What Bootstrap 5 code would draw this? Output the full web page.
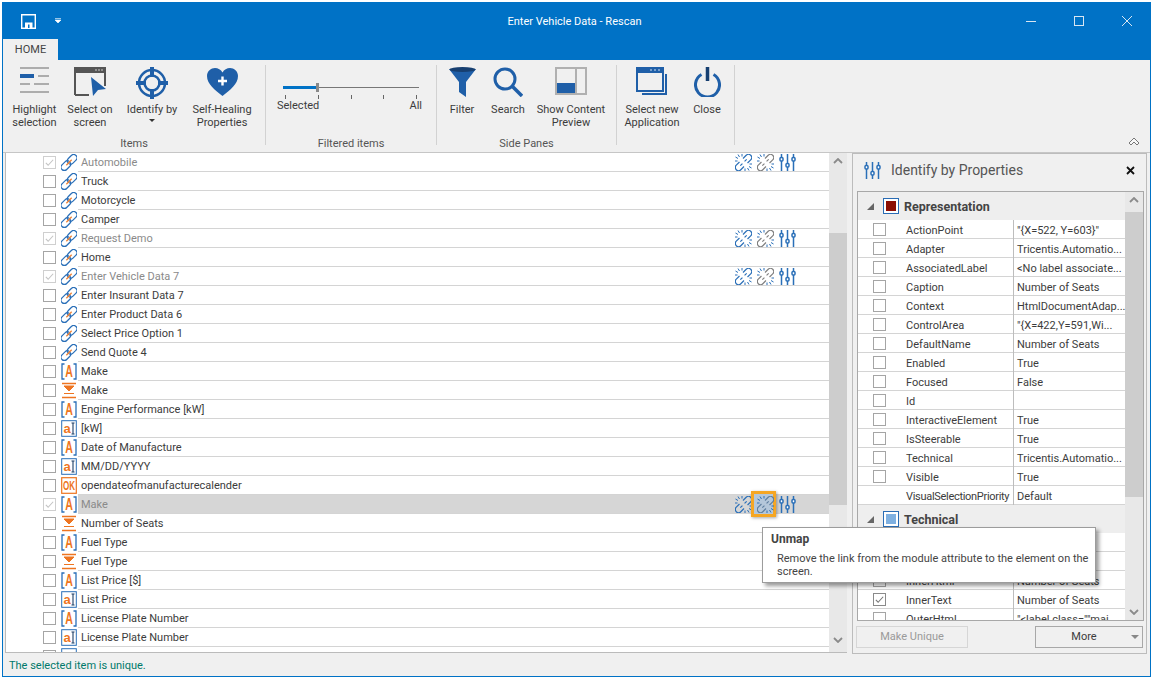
<!DOCTYPE html>
<html lang="en">
<head>
    <meta charset="UTF-8">
    <meta name="viewport" content="width=device-width, initial-scale=1.0">
    <title>Enter Vehicle Data - Rescan</title>
    <link href="https://cdn.jsdelivr.net/npm/bootstrap@5.3.0/dist/css/bootstrap.min.css" rel="stylesheet">

    <style>
        body { margin: 0; background: #fff; font: 11px/13px Roboto, "Liberation Sans", sans-serif; color: #3c3c3c; overflow: hidden; }
        svg { display: block; flex: none; }
        .app-window { margin: 2px 0 0 2px; width: 1149px; height: 675px; border: 1px solid #0072c6; background: #f0f0f0; }

        /* title bar */
        .titlebar { height: 36px; background: #0072c6; color: #fff; padding-left: 18px; position: relative; }
        .titlebar .title { position: absolute; left: 0; right: 4px; text-align: center; }
        .titlebar .qat-arrow { margin-left: 19px; }
        .win-btns { margin-left: auto; gap: 38px; padding-right: 18px; }
        .tabstrip { height: 21px; background: #0072c6; }
        .tabstrip .tab { width: 55px; background: #f0f0f0; text-align: center; line-height: 21px; color: #444; }

        /* ribbon */
        .ribbon { height: 93px; border-bottom: 1px solid #c6c6c6; }
        .rb-group { height: 92px; padding-top: 7px; }
        .rb-btn { text-align: center; }
        .rb-btn svg { margin: 0 auto 6px; }
        .rb-label { margin-top: auto; height: 15px; text-align: center; line-height: 14px; color: #555; }
        .rb-sep { width: 1px; height: 80px; margin-top: 5px; background: #d2d2d2; }
        .caret-mini { margin: 3px auto 0; width: 0; border: 3px solid transparent; border-top-color: #333; border-bottom: 0; }
        .slider { width: 136px; margin: 16px 0 0 17px; }
        .slider .fill { width: 33px; height: 3px; background: #0072c6; }
        .slider .thumb { width: 3px; height: 9px; background: #8a8a8a; }
        .slider .rail { height: 1px; background: #777; }
        .ticks { padding: 3px 2px 0; }
        .ticks i { width: 1px; height: 4px; background: #666; }
        .slider-text { margin: 0 -3px 0 -6px; }
        .ribbon-collapse { margin: 0 10px 6px auto; align-self: flex-end; }

        /* element list */
        .list-area { margin: 0 5px 0 2px; width: 842px; height: 500px; border-bottom: 1px solid #bbb; }
        .elements { width: 824px; background: #fff; border-left: 1px solid #bbb; overflow: hidden; }
        .el-row { height: 19px; padding-left: 37px; }
        .el-row .el-text { flex: 1; height: 19px; margin-left: 1px; padding-left: 3px; line-height: 20px; border-bottom: 1px solid #d4d4d4; color: #3c3c3c; }
        .el-row.dim .el-text { color: #8a8a8a; }
        .el-row.active .el-text { background: #d6d6d6; }
        .el-row svg.kind { margin-left: 5px; overflow: visible; }
        .actions { gap: 5px; padding-right: 33px; height: 18px; }
        .act-hot { position: relative; }
        .act-hot::before { content: ""; position: absolute; left: -6px; top: -5px; width: 25px; height: 26px; background: #b4c7da; border: 3px solid #f5a623; box-shadow: 1px 1px 3px rgba(0, 0, 0, .35); }
        .act-hot svg { position: relative; }

        .form-check-input.box[type=checkbox] { width: 13px; height: 13px; margin: 0; flex: none; border: 1px solid #a5a5a5; border-radius: 0; background-color: #fff; background-size: 11px; opacity: 1; }
        .form-check-input.box[type=checkbox]:checked { border-color: #8a8a8a; background-image: url("data:image/svg+xml,%3csvg xmlns='http://www.w3.org/2000/svg' viewBox='0 0 12 12'%3e%3cpath fill='none' stroke='%23777' stroke-width='1.2' d='M2 6.5l2.5 2.5L10 3'/%3e%3c/svg%3e"); }
        .form-check-input.box.soft[type=checkbox]:checked { border-color: #cfcfcf; background-image: url("data:image/svg+xml,%3csvg xmlns='http://www.w3.org/2000/svg' viewBox='0 0 12 12'%3e%3cpath fill='none' stroke='%23c4c4c4' stroke-width='1.2' d='M2 6.5l2.5 2.5L10 3'/%3e%3c/svg%3e"); }

        .vscroll { width: 18px; background: #e8e8e8; }
        .vscroll .arrow { height: 16px; }
        .vscroll .thumb { background: #cdcdcd; }
        .main-scroll .gap-top { height: 64px; }
        .main-scroll .thumb { height: 272px; }
        .prop-scroll .thumb { height: 285px; }

        /* properties pane */
        .pane { width: 295px; height: 501px; border: 1px solid #bcbcbc; padding: 0 3px 4px 4px; }
        .pane-head { height: 37px; padding: 0 0 5px 7px; gap: 10px; font-size: 14px; color: #555; }
        .pane-close { margin-left: auto; margin-right: 8px; }
        .prop-box { width: 287px; height: 430px; border: 1px solid #a8a8a8; background: #fff; overflow: hidden; }
        .prop-list { width: 269px; overflow: hidden; }
        .section { background: #eee; height: 28px; padding-left: 9px; font-size: 12.5px; font-weight: 700; color: #444; flex: none; }
        .section .tri { width: 0; height: 0; border-left: 7px solid transparent; border-bottom: 7px solid #666; margin-right: 9px; }
        .section .swatch { width: 16px; height: 16px; border: 1px solid #2a6cb4; padding: 2px; margin-right: 5px; background: #fff; }
        .section .swatch i { display: block; height: 100%; }
        .prop-row { height: 19px; flex: none; border-bottom: 1px solid #d4d4d4; color: #3c3c3c; }
        .prop-row .cell-check { width: 48px; padding-left: 15px; }
        .prop-row .cell-name { width: 107px; padding-top: 2px; white-space: nowrap; }
        .prop-row .cell-name.tight { letter-spacing: -.3px; }
        .prop-row .cell-val { flex: 1; height: 19px; padding-left: 3px; line-height: 21px; border-left: 1px solid #bdbdbd; white-space: nowrap; overflow: hidden; }
        .pane-btns { height: 22px; margin-top: 5px; }
        .btn.flat { height: 22px; padding: 0; border-radius: 0; font-size: inherit; line-height: 20px; background: #f0f0f0; color: #3c3c3c; }
        .btn.flat.make-unique { width: 112px; margin-left: -1px; border: 1px solid #d6d6d6; color: #9a9a9a; opacity: 1; }
        .btn.flat.more { width: 108px; border: 1px solid #a8a8a8; margin-left: auto; padding-right: 10px; position: relative; }
        .btn.flat.more::after { content: ""; position: absolute; right: 3px; top: 8px; border: 4px solid transparent; border-top-color: #888; border-bottom: 0; }

        .statusbar { height: 22px; padding-left: 6px; color: #00796b; }

        /* tooltip over the grid */
        .hint { position: absolute; left: 762px; top: 527px; width: 334px; height: 56px; background: #fff; border: 1px solid #9c9c9c; box-shadow: 3px 3px 4px rgba(0, 0, 0, .4); padding: 5px 3px 5px 8px; color: #444; }
        .hint b { display: block; margin-bottom: 6px; font-size: 12px; }
        .hint p { margin: 0 0 0 6px; }
    </style>
</head>
<body>

    <!-- shared icons -->
    <svg width="0" height="0" class="position-absolute">
        <symbol id="i-link" viewBox="0 0 17 17">
            <g transform="rotate(-45 8.5 8.5)" fill="none">
                <rect x="-2" y="5" width="11.500" height="7" rx="3.500" stroke="#2a6fb8" stroke-width="1.300"/>
                <rect x="7.500" y="5" width="11.500" height="7" rx="3.500" stroke="#2a6fb8" stroke-width="1.300"/>
                <path d="M4.500 8.500h8" stroke="#f08030" stroke-width="1.400"/>
            </g>
        </symbol>
        <symbol id="i-unlink" viewBox="0 0 17 17">
            <g transform="rotate(-45 8.5 8.5)" fill="none" stroke="currentColor" stroke-width="1.200">
                <path d="M6 5.300H1.500a3.200 3.200 0 0 0 0 6.400H6"/>
                <path d="M11 5.300h4.500a3.200 3.200 0 0 1 0 6.400H11"/>
                <path d="M4 8.500h3M10 8.500h3"/>
            </g>
            <path d="M3 0.500l1.500 2.500M0.500 3l2.500 1.500M0 7h2.500M7 0v2.500M14 16.500l-1.500-2.500M16.500 14l-2.500-1.500M17 10h-2.500M10 17v-2.500" stroke="#2a6fb8" fill="none"/>
        </symbol>
        <symbol id="i-tune" viewBox="0 0 17 17">
            <path d="M2.500 0v17M8.500 0v17M14.500 0v17" stroke="#2a6fb8" stroke-width="1.500"/>
            <g fill="#fff" stroke="#2a6fb8" stroke-width="1.500">
                <rect x="1" y="3.500" width="3" height="3.500" rx="1"/>
                <rect x="7" y="9.500" width="3" height="3.500" rx="1"/>
                <rect x="13" y="3.500" width="3" height="3.500" rx="1"/>
            </g>
        </symbol>
        <symbol id="up" viewBox="0 0 10 6"><path d="M1 5l4-4 4 4" fill="none" stroke="#8a8a8a" stroke-width="1.800"/></symbol>
        <symbol id="down" viewBox="0 0 10 6"><path d="M1 1l4 4 4-4" fill="none" stroke="#8a8a8a" stroke-width="1.800"/></symbol>
    </svg>

    <div class="app-window d-flex flex-column">

        <div class="titlebar d-flex align-items-center">
            <svg width="15" height="15" viewBox="0 0 15 15"><path d="M.7.7h13.600v13.600H.7z" fill="none" stroke="#fff" stroke-width="1.400"/><path d="M4 14V8.500h7.500V14z" fill="#fff"/><path d="M7 10.500h1.500V14H7z" fill="#0072c6"/></svg>
            <svg class="qat-arrow" width="6" height="6" viewBox="0 0 6 6"><path d="M0 .5h6M0 2h6l-3 3z" fill="#fff" stroke="#fff" stroke-width=".6"/></svg>
            <div class="title">Enter Vehicle Data - Rescan</div>
            <div class="win-btns d-flex align-items-center">
                <svg width="10" height="10" viewBox="0 0 10 10"><path d="M0 5.500h10" stroke="#d8e6f2"/></svg>
                <svg width="10" height="10" viewBox="0 0 10 10"><rect x=".5" y=".5" width="9" height="9" fill="none" stroke="#d8e6f2"/></svg>
                <svg width="10" height="10" viewBox="0 0 10 10"><path d="M0 0l10 10M10 0L0 10" stroke="#d8e6f2"/></svg>
            </div>
        </div>

        <div class="tabstrip"><div class="tab">HOME</div></div>

        <div class="ribbon d-flex">
            <!-- Items -->
            <div class="rb-group d-flex flex-column" style="width:262px">
                <div class="d-flex ps-1">
                    <div class="rb-btn" style="width:55px">
                        <svg width="29" height="30" viewBox="0 0 29 30"><path d="M0 1h29M0 25h29M0 17h10M14 17h15M18 9h11" stroke="#adadad" stroke-width="2"/><rect y="7" width="14" height="4" fill="#1f5fa8"/></svg>
                        Highlight selection
                    </div>
                    <div class="rb-btn" style="width:56px">
                        <svg width="33" height="30" viewBox="0 0 33 30"><path d="M1 28V1h30v18M1 28h14" fill="none" stroke="#555" stroke-width="2"/><rect x="1" y="1" width="30" height="5" fill="#555"/><path d="M24 3h2M27 3h2M21 3h2" stroke="#ccc"/><path d="M17 10l15 12-8 1-5 6z" fill="#1f5fa8"/></svg>
                        Select on screen
                    </div>
                    <div class="rb-btn" style="width:68px">
                        <svg width="32" height="32" viewBox="0 0 32 32" style="margin-bottom:4px"><g fill="none" stroke="#1f5fa8"><circle cx="16" cy="16" r="13" stroke-width="2.500"/><circle cx="16" cy="16" r="7.500" stroke-width="2.500"/><path d="M16 0v10M16 22v10M0 16h10M22 16h10" stroke-width="4"/></g></svg>
                        Identify by
                        <div class="caret-mini"></div>
                    </div>
                    <div class="rb-btn" style="width:72px">
                        <svg width="33" height="30" viewBox="0 0 33 30"><path d="M16.500 29C9 23 1 17 1 9c0-5 4-8 8-8 3 0 6 1.500 7.500 4.500C18 2.500 21 1 24 1c4 0 8 3 8 8 0 8-8 14-15.500 20z" fill="#1f5fa8"/><path d="M16.500 9.500v9M12 14h9" stroke="#fff" stroke-width="2.400"/></svg>
                        Self-Healing Properties
                    </div>
                </div>
                <div class="rb-label">Items</div>
            </div>
            <div class="rb-sep"></div>

            <!-- Filtered items -->
            <div class="rb-group d-flex flex-column" style="width:170px">
                <div class="slider">
                    <div class="d-flex align-items-center">
                        <div class="fill"></div>
                        <div class="thumb"></div>
                        <div class="rail flex-grow-1"></div>
                    </div>
                    <div class="ticks d-flex justify-content-between"><i></i><i></i><i></i><i></i><i></i></div>
                    <div class="slider-text d-flex justify-content-between"><span>Selected</span><span>All</span></div>
                </div>
                <div class="rb-label">Filtered items</div>
            </div>
            <div class="rb-sep"></div>

            <!-- Side Panes -->
            <div class="rb-group d-flex flex-column" style="width:179px">
                <div class="d-flex" style="padding-left:5px">
                    <div class="rb-btn" style="width:40px">
                        <svg width="27" height="30" viewBox="0 0 27 30"><path d="M0 2h27L17 15v15l-7-5V15z" fill="#1f5fa8"/><ellipse cx="13.500" cy="2.500" rx="13" ry="2.500" fill="#173f70"/></svg>
                        Filter
                    </div>
                    <div class="rb-btn" style="width:52px">
                        <svg width="30" height="30" viewBox="0 0 30 30"><circle cx="12" cy="12" r="10" fill="none" stroke="#1f5fa8" stroke-width="3"/><path d="M19 19l10 10" stroke="#1f5fa8" stroke-width="3.500"/></svg>
                        Search
                    </div>
                    <div class="rb-btn" style="width:74px">
                        <svg width="32" height="30" viewBox="0 0 32 30"><rect x="1" y="1" width="30" height="26" fill="none" stroke="#b0b0b0" stroke-width="2"/><path d="M21 1v26" stroke="#b0b0b0" stroke-width="2"/><rect x="2" y="16" width="18" height="10" fill="#1f5fa8"/></svg>
                        Show Content Preview
                    </div>
                </div>
                <div class="rb-label">Side Panes</div>
            </div>
            <div class="rb-sep"></div>

            <!-- Application -->
            <div class="rb-group" style="width:117px">
                <div class="d-flex">
                    <div class="rb-btn" style="width:70px">
                        <svg width="32" height="30" viewBox="0 0 32 30"><rect x="1" y="1" width="26" height="23" fill="#f0f0f0" stroke="#1f5fa8" stroke-width="2"/><rect x="1" y="1" width="26" height="5" fill="#1f5fa8"/><path d="M14 3h2M18 3h2M22 3h2" stroke="#cfe0f2"/><path d="M29 7h2v21H6v-2h23z" fill="#1f5fa8"/></svg>
                        Select new Application
                    </div>
                    <div class="rb-btn" style="width:40px">
                        <svg width="27" height="30" viewBox="0 0 27 30"><path d="M7.500 7.500a12 12 0 1 0 12 0" fill="none" stroke="#1f5fa8" stroke-width="3"/><path d="M13.500 0v14" stroke="#173f70" stroke-width="3.500"/></svg>
                        Close
                    </div>
                </div>
            </div>
            <div class="rb-sep"></div>

            <svg class="ribbon-collapse" width="12" height="9" viewBox="0 0 12 9"><path d="M6 1l5 5-2 2-3-3-3 3-2-2z" fill="#f8f8f8" stroke="#777"/></svg>
        </div>

        <div class="d-flex flex-grow-1">
            <div class="list-area d-flex">
                <div class="elements" id="elements"></div>
                <div class="vscroll main-scroll d-flex flex-column">
                    <div class="arrow d-flex align-items-center justify-content-center"><svg width="10" height="6"><use href="#up"/></svg></div>
                    <div class="gap-top"></div>
                    <div class="thumb"></div>
                    <div class="flex-grow-1"></div>
                    <div class="arrow d-flex align-items-center justify-content-center mb-1"><svg width="10" height="6"><use href="#down"/></svg></div>
                </div>
            </div>

            <div class="pane d-flex flex-column">
                <div class="pane-head d-flex align-items-center">
                    <svg width="17" height="17"><use href="#i-tune"/></svg>
                    Identify by Properties
                    <svg class="pane-close" width="9" height="9" viewBox="0 0 9 9"><path d="M1 1l7 7M8 1L1 8" stroke="#111" stroke-width="1.800"/></svg>
                </div>
                <div class="prop-box d-flex">
                    <div class="prop-list d-flex flex-column" id="props"></div>
                    <div class="vscroll prop-scroll d-flex flex-column">
                        <div class="arrow d-flex align-items-center justify-content-center"><svg width="10" height="6"><use href="#up"/></svg></div>
                        <div class="thumb mt-1"></div>
                        <div class="flex-grow-1"></div>
                        <div class="arrow d-flex align-items-center justify-content-center"><svg width="10" height="6"><use href="#down"/></svg></div>
                    </div>
                </div>
                <div class="pane-btns d-flex">
                    <button class="btn flat make-unique" disabled>Make Unique</button>
                    <button class="btn flat more">More</button>
                </div>
            </div>
        </div>

        <div class="statusbar d-flex align-items-center">The selected item is unique.</div>
    </div>

    <div class="hint">
        <b>Unmap</b>
        <p>Remove the link from the module attribute to the element on the screen.</p>
    </div>

    <script src="https://cdn.jsdelivr.net/npm/bootstrap@5.3.0/dist/js/bootstrap.bundle.min.js"></script>

    <script>
        // the orange control-type icons, kept inline so their letters sit in the row
        const kindIcons = {
            link: `<use href="#i-link"/>`,
            label: `<path d="M3.500 1H1v15h2.500M12.500 1H15v15h-2.500" fill="none" stroke="#2a6fb8" stroke-width="1.300"/>
                <text x="8" y="14" transform="translate(8 0) scale(.66 1) translate(-8 0)" text-anchor="middle" font-family="Liberation Sans" font-weight="700" font-size="16" fill="#ee7521">A</text>`,
            combo: `<path d="M1 1.500h14M1 15.500h14" stroke="#ee7521" stroke-width="1.300"/>
                <path d="M3 4h10l-5 5zM3 11.500h10" fill="#ee7521" stroke="#ee7521"/>`,
            input: `<rect x=".7" y=".7" width="14.600" height="15.600" fill="none" stroke="#2a6fb8" stroke-width="1"/>
                <text x="6" y="13" text-anchor="middle" font-family="Liberation Sans" font-weight="700" font-size="13" fill="#ee7521">a</text>
                <path d="M10.500 3h3M10.500 14h3M12 3v11" stroke="#1d3f66" stroke-width="1.100" fill="none"/>`,
            ok: `<rect x=".7" y=".7" width="14.600" height="15.600" fill="none" stroke="#ee7521" stroke-width="1.200"/>
                <text x="8" y="13" transform="translate(8 0) scale(.62 1) translate(-8 0)" text-anchor="middle" font-family="Liberation Sans" font-weight="700" font-size="13" fill="#ee7521">OK</text>`,
            frame: `<rect x=".7" y=".7" width="14.600" height="15.600" fill="none" stroke="#2a6fb8" stroke-width="1"/>`
        };

        // kind, text, state (d = mapped and dimmed, s = selected row)
        const elements = [
            ["link", "Automobile", "d"], ["link", "Truck"], ["link", "Motorcycle"], ["link", "Camper"],
            ["link", "Request Demo", "d"], ["link", "Home"], ["link", "Enter Vehicle Data 7", "d"],
            ["link", "Enter Insurant Data 7"], ["link", "Enter Product Data 6"],
            ["link", "Select Price Option 1"], ["link", "Send Quote 4"],
            ["label", "Make"], ["combo", "Make"], ["label", "Engine Performance [kW]"], ["input", "[kW]"],
            ["label", "Date of Manufacture"], ["input", "MM/DD/YYYY"], ["ok", "opendateofmanufacturecalender"],
            ["label", "Make", "s"], ["combo", "Number of Seats"], ["label", "Fuel Type"], ["combo", "Fuel Type"],
            ["label", "List Price [$]"], ["input", "List Price"],
            ["label", "License Plate Number"], ["input", "License Plate Number"], ["frame", ""]
        ];

        const elementList = document.getElementById("elements");
        elements.forEach(([kind, text, state]) => {
            const mapped = state === "d" || state === "s";
            let actions = "";
            if (mapped) {
                actions = `<div class="actions d-flex align-items-center">
                    <svg width="17" height="17" style="color:#2a6fb8"><use href="#i-unlink"/></svg>
                    <span class="${state === "s" ? "act-hot" : ""}"><svg width="17" height="17" style="color:${state === "s" ? "#5f7f9f" : "#808080"}"><use href="#i-unlink"/></svg></span>
                    <svg width="17" height="17"><use href="#i-tune"/></svg>
                </div>`;
            }
            elementList.insertAdjacentHTML("beforeend", `
                <div class="el-row d-flex align-items-center ${mapped ? "dim" : ""} ${state === "s" ? "active" : ""}">
                    <input type="checkbox" class="form-check-input box ${mapped ? "soft" : ""}" ${mapped ? "checked" : ""}>
                    <svg class="kind" width="16" height="17" viewBox="0 0 16 17">${kindIcons[kind]}</svg>
                    <div class="el-text d-flex justify-content-between"><span>${text}</span>${actions}</div>
                </div>`);
        });

        const representation = [
            ["ActionPoint", '"{X=522, Y=603}"'], ["Adapter", "Tricentis.Automatio..."],
            ["AssociatedLabel", "&lt;No label associate..."], ["Caption", "Number of Seats"],
            ["Context", "HtmlDocumentAdap..."], ["ControlArea", '"{X=422,Y=591,Wi...'],
            ["DefaultName", "Number of Seats"], ["Enabled", "True"], ["Focused", "False"], ["Id", ""],
            ["InteractiveElement", "True"], ["IsSteerable", "True"], ["Technical", "Tricentis.Automatio..."],
            ["Visible", "True"], ["VisualSelectionPriority", "Default", "nobox"]
        ];
        // the first two rows of this section lie fully under the tooltip
        const technical = [
            ["", ""], ["", ""], ["InnerHtml", "Number of Seats"],
            ["InnerText", "Number of Seats", "on"], ["OuterHtml", '"&lt;label class=""mai...']
        ];

        function section(name, color) {
            return `<div class="section d-flex align-items-center"><span class="tri"></span><span class="swatch"><i style="background:${color}"></i></span>${name}</div>`;
        }
        function propRow([name, value, flag]) {
            const box = flag === "nobox" ? "" : `<input type="checkbox" class="form-check-input box" ${flag === "on" ? "checked" : ""}>`;
            return `<div class="prop-row d-flex align-items-center"><div class="cell-check">${box}</div><div class="cell-name ${name.length > 20 ? "tight" : ""}">${name}</div><div class="cell-val">${value}</div></div>`;
        }
        document.getElementById("props").innerHTML =
            section("Representation", "#8b0e04") + representation.map(propRow).join("") +
            section("Technical", "#7fb0e0") + technical.map(propRow).join("");
    </script>
</body>
</html>
